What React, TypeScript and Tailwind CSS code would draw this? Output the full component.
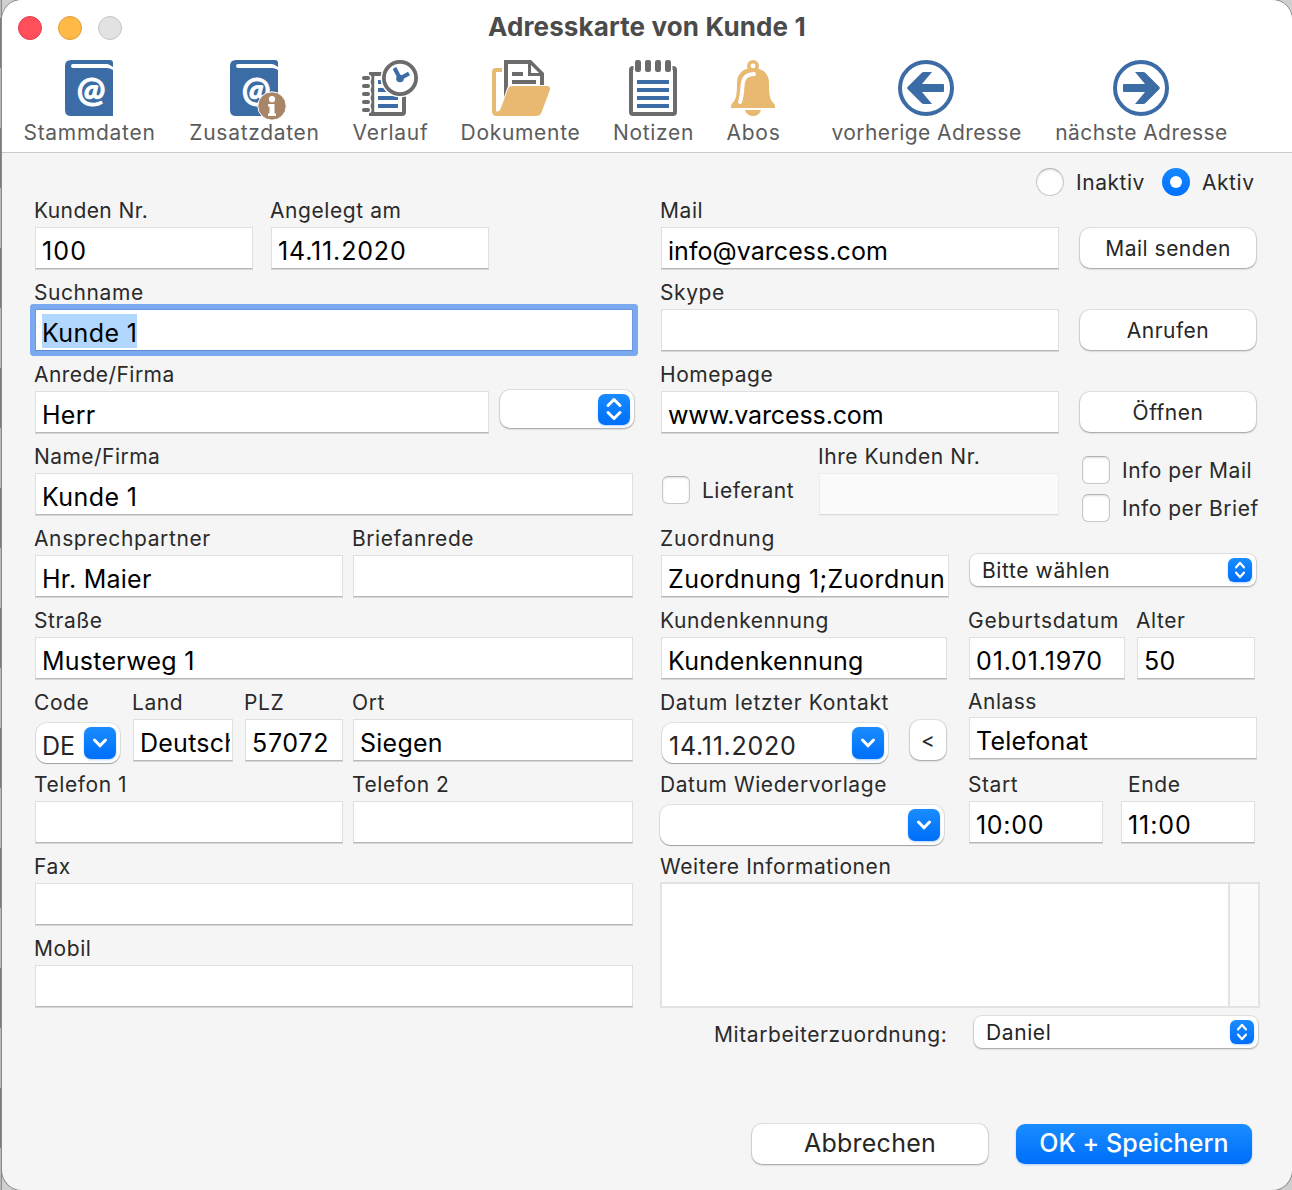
import type { ReactNode } from "react";
import clsx from "clsx";

const BLUE = "#3b6ca6";
const GRAY = "#6b6b6b";
const TAN = "#e9b972";

function Book() {
    return (
        <>
            <path d="M10 0H49Q52 0 52 3V56H10Q4 56 4 50V6Q4 0 10 0Z" fill={BLUE} />
            <path d="M12 4H46Q48 4 49.500 5.500L52 7V10Q49 8 46 8H12A2 2 0 0 1 12 4Z" fill="#fff" />
            <text x="30" y="41.500" textAnchor="middle" fontSize="34" fontWeight="700" fontFamily="Lato, sans-serif" fill="#fff" stroke="#fff" strokeWidth="0.9">@</text>
        </>
    );
}

function StammdatenIcon() {
    return (
        <svg width="56" height="60" viewBox="0 0 56 60" className="overflow-visible">
            <Book />
        </svg>
    );
}

function ZusatzdatenIcon() {
    return (
        <svg width="56" height="60" viewBox="0 0 56 60" className="overflow-visible">
            <Book />
            <circle cx="46" cy="46" r="14.200" fill="#a98568" stroke="#fff" strokeWidth="1" />
            <circle cx="46" cy="39.200" r="3.100" fill="#fff" />
            <path d="M42 44H48.500V53.500H50V56H42V53.500H43.500V46.500H42Z" fill="#fff" />
        </svg>
    );
}

function VerlaufIcon() {
    return (
        <svg width="56" height="60" viewBox="0 0 56 60">
            <path d="M7 14H40A2 2 0 0 1 42 16V52A2 2 0 0 1 40 54H7" fill="none" stroke={GRAY} strokeWidth="4" />
            <path d="M10.500 13V55" stroke={GRAY} strokeWidth="3.500" />
            {[18, 26, 34, 42, 50].map((y) => (
                <g key={y}>
                    <rect x="-1" y={y - 3.2} width="10.500" height="6.400" rx="3.200" fill="#fff" />
                    <rect x="0" y={y - 2} width="8" height="4" rx="2" fill={GRAY} />
                </g>
            ))}
            {[22, 30, 38, 46].map((y) => (
                <rect key={y} x="16" y={y - 2} width="20" height="4" fill={BLUE} />
            ))}
            <circle cx="38" cy="18" r="19.500" fill="#fff" />
            <circle cx="38" cy="18" r="16.100" fill="#fff" stroke={GRAY} strokeWidth="3.800" />
            <path d="M32.500 8L38 18.500L47 13.500" fill="none" stroke={BLUE} strokeWidth="4" />
            <circle cx="38" cy="18.500" r="3.800" fill={BLUE} />
        </svg>
    );
}

function DokumenteIcon() {
    return (
        <svg width="60" height="60" viewBox="0 0 60 60">
            <path d="M12 10H6Q4 10 4 12V51Q4 54 7 54H10" fill="none" stroke={TAN} strokeWidth="4" />
            <path d="M14 0H41L54 13V25H50V16H38V4H18V26L14 37Z" fill={GRAY} />
            <path d="M41 5V13H49Z" fill="#fff" />
            <path d="M22 12H33V16H22ZM22 20H46V24H22Z" fill={GRAY} />
            <path d="M22 26H57Q61 26 59.800 30L51.500 52.500Q50 56 46 56H7Q3 56 2.500 52L6 51.500Q9.500 52 10.500 49L18 29Q19 26 22 26Z" fill={TAN} />
        </svg>
    );
}

function NotizenIcon() {
    return (
        <svg width="56" height="60" viewBox="0 0 56 60">
            <rect x="6" y="8" width="44" height="46" rx="2" fill="#fff" stroke={GRAY} strokeWidth="4" />
            <rect x="8.500" y="0" width="39" height="14" fill="#fff" />
            {[10, 20, 30, 40].map((x) => (
                <rect key={x} x={x} y="0" width="6" height="12" rx="2.200" fill={GRAY} />
            ))}
            {[20, 28, 36, 44].map((y) => (
                <rect key={y} x="12" y={y} width="32" height="4" fill={BLUE} />
            ))}
        </svg>
    );
}

function AbosIcon() {
    return (
        <svg width="56" height="60" viewBox="0 0 56 60">
            <circle cx="28" cy="6" r="4.200" fill="none" stroke={TAN} strokeWidth="3.600" />
            <path d="M28 8C38 8 44 14 44 23C44 33 44.500 40 49 43.500Q50 44.500 50 46V48H6V46Q6 44.500 7 43.500C11.500 40 12 33 12 23C12 14 18 8 28 8Z" fill={TAN} />
            <path d="M29 14C20 14.500 18 19 17.500 26C17 34 16.500 38 15 42" fill="none" stroke="#fff" strokeWidth="4" strokeLinecap="round" />
            <circle cx="28" cy="6" r="2.300" fill="#fff" />
            <path d="M20 50H36Q34 56 28 56Q22 56 20 50Z" fill={TAN} />
        </svg>
    );
}

function ArrowIcon({ right }: { right?: boolean }) {
    return (
        <svg width="56" height="60" viewBox="0 0 56 60">
            <circle cx="28" cy="28" r="26" fill="none" stroke={BLUE} strokeWidth="4" />
            <path
                d="M9.500 27Q8.800 28 9.500 29L23.500 43Q24.500 44 26 44H34L24 32H45Q46 32 46 31V25Q46 24 45 24H24L34 12H26Q24.500 12 23.500 13Z"
                fill={BLUE}
                transform={right ? "matrix(-1 0 0 1 56 0)" : undefined}
            />
        </svg>
    );
}

interface ToolbarItemProps {
    label: string;
    className: string;
    tight?: boolean;
    children: ReactNode;
}

function ToolbarItem({ label, className, tight, children }: ToolbarItemProps) {
    return (
        <div className={clsx("flex shrink-0 flex-col items-center", className)}>
            {children}
            <span
                className={clsx(
                    "h-6 pl-px text-[21px] leading-[26px] whitespace-nowrap text-[#5c5c5c]",
                    tight ? "tracking-[0.43px]" : "tracking-[0.7px]"
                )}
            >
                {label}
            </span>
        </div>
    );
}

function Label({ children, className = "tracking-[0.57px]" }: { children: ReactNode; className?: string }) {
    return (
        <div className={clsx("-ml-px h-[29px] text-[21px] leading-[25px] whitespace-nowrap text-[#2a2a2a]", className)}>
            {children}
        </div>
    );
}

interface FieldProps {
    label: string;
    value?: ReactNode;
    className?: string;
    labelClassName?: string;
    valueClassName?: string;
    focused?: boolean;
    disabled?: boolean;
}

function Field({ label, value, className, labelClassName, valueClassName = "tracking-[0.25px]", focused, disabled }: FieldProps) {
    return (
        <div className={clsx("shrink-0", className)}>
            <Label className={labelClassName}>{label}</Label>
            <div
                className={clsx(
                    "h-[42px] border pr-[2px] pl-[6px] text-[25px] leading-[46px] whitespace-nowrap text-black",
                    valueClassName,
                    focused && "rounded-[1px] border-[#6a9ae2] border-b-[#5a8ad2] bg-white shadow-[0_0_0_5px_#7aa9f0]",
                    disabled && "border-[#ececec] border-b-[#dadada] bg-[#fafafa] shadow-[0_1px_0_#ececec]",
                    !focused && !disabled && "border-[#dfdfdf] border-b-[#b8b8b8] bg-white shadow-[0_1px_0_#d6d6d6]"
                )}
            >
                <div className="h-full overflow-hidden">{value}</div>
            </div>
        </div>
    );
}

function PushButton({ children, className }: { children: ReactNode; className?: string }) {
    return (
        <button
            className={clsx(
                "flex shrink-0 items-center justify-center rounded-[10px] bg-white text-[#262626] shadow-[0_0_0_1px_rgba(0,0,0,0.08),0_1px_2px_rgba(0,0,0,0.3)]",
                className
            )}
        >
            {children}
        </button>
    );
}

function UpDown({ small }: { small?: boolean }) {
    return (
        <span
            className={clsx(
                "flex shrink-0 items-center justify-center bg-linear-to-b from-[#1a8cff] to-[#006ef9] shadow-[0_1px_2px_rgba(0,110,255,0.3)]",
                small ? "size-6 rounded-[6px]" : "h-[31px] w-8 rounded-[7px]"
            )}
        >
            <svg width={small ? 12 : 18} height={small ? 18 : 24} viewBox="0 0 18 24" preserveAspectRatio="none">
                <path d="M3 8.500L9 2.500L15 8.500M3 15.500L9 21.500L15 15.500" fill="none" stroke="#fff" strokeWidth="3" strokeLinecap="round" strokeLinejoin="round" />
            </svg>
        </span>
    );
}

function PopUp({ value, className, small }: { value?: string; className: string; small?: boolean }) {
    return (
        <div
            className={clsx(
                "flex shrink-0 items-center justify-between bg-white text-[21px] tracking-[0.6px] text-[#262626] shadow-[0_0_0_1px_rgba(0,0,0,0.08),0_1px_2px_rgba(0,0,0,0.3)]",
                small ? "rounded-[8px] pr-1 pl-3" : "rounded-[10px] pr-1",
                className
            )}
        >
            <span className="pt-[2px]">{value}</span>
            <UpDown small={small} />
        </div>
    );
}

function ComboBox({ value, className }: { value?: string; className: string }) {
    return (
        <div
            className={clsx(
                "flex h-[40px] shrink-0 items-center justify-between rounded-[11px] bg-white pr-1 text-[25px] text-[#262626] shadow-[0_0_0_1px_rgba(0,0,0,0.08),0_1px_1px_rgba(0,0,0,0.3)]",
                className
            )}
        >
            <span className="pt-[8px]">{value}</span>
            <span className="flex size-8 shrink-0 items-center justify-center rounded-[7px] bg-linear-to-b from-[#1a8cff] to-[#006ef9] shadow-[0_1px_2px_rgba(0,110,255,0.3)]">
                <svg width="16" height="10" viewBox="0 0 16 10">
                    <path d="M2.500 2L8 7.800L13.500 2" fill="none" stroke="#fff" strokeWidth="3" strokeLinecap="round" strokeLinejoin="round" />
                </svg>
            </span>
        </div>
    );
}

function Check({ label }: { label: string }) {
    return (
        <label className="flex h-7 shrink-0 items-start gap-3 text-[21px] leading-[30px] tracking-[0.5px] whitespace-nowrap text-[#2a2a2a]">
            <span className="size-7 rounded-[6px] border border-[#c8c8c8] border-t-[#b4b4b4] bg-white shadow-[inset_0_1px_2px_rgba(0,0,0,0.14)]" />
            {label}
        </label>
    );
}

function Row({ children }: { children: ReactNode }) {
    return <div className="flex h-[82px]">{children}</div>;
}

export default function App() {
    return (
        <div className="flex h-[1190px] w-[1292px] overflow-hidden bg-[#cfcfcf] font-['Inter',sans-serif]">
            {/* Fensterrand links */}
            <div className="w-[2px] shrink-0 border-r border-[#8d8d8d] bg-[repeating-linear-gradient(to_bottom,#b9b9b9_0px,#b9b9b9_60px,#7d7d7d_60px,#7d7d7d_120px)] bg-[position:0_68px]" />
            <div className="flex w-[1290px] shrink-0 flex-col overflow-hidden rounded-[20px] bg-[#f5f5f5] shadow-[0_0_0_1px_#8a8a8a]">
                <header className="h-[153px] shrink-0 border-b border-[#cacaca] bg-white">
                    <div className="flex h-[60px] items-start pt-4">
                        <div className="ml-4 flex w-[104px] gap-4">
                            <span className="size-6 rounded-full border border-[#e2404a] bg-[#ff4f5a]" />
                            <span className="size-6 rounded-full border border-[#dd9d35] bg-[#ffb946]" />
                            <span className="size-6 rounded-full border border-[#c4c4c4] bg-[#e2e2e2]" />
                        </div>
                        <h1 className="ml-[366px] text-[26px] leading-[22px] font-bold tracking-[0.13px] whitespace-nowrap text-[#4b4b4b]">Adresskarte von Kunde 1</h1>
                    </div>
                    <div className="flex pl-[21px]">
                        <ToolbarItem label="Stammdaten" className="w-[132px]"><StammdatenIcon /></ToolbarItem>
                        <ToolbarItem label="Zusatzdaten" className="ml-[33px] w-[132px]"><ZusatzdatenIcon /></ToolbarItem>
                        <ToolbarItem label="Verlauf" className="ml-[33px] w-[74px]"><VerlaufIcon /></ToolbarItem>
                        <ToolbarItem label="Dokumente" className="ml-[33px] w-[120px]"><DokumenteIcon /></ToolbarItem>
                        <ToolbarItem label="Notizen" className="ml-[33px] w-[80px]"><NotizenIcon /></ToolbarItem>
                        <ToolbarItem label="Abos" className="ml-[33px] w-[54px]"><AbosIcon /></ToolbarItem>
                        <ToolbarItem tight label="vorherige Adresse" className="ml-[51px] w-[190px]"><ArrowIcon /></ToolbarItem>
                        <ToolbarItem tight label="nächste Adresse" className="ml-[33px] w-[174px]"><ArrowIcon right /></ToolbarItem>
                    </div>
                </header>

                <main className="flex h-[902px] shrink-0">
                    <section className="ml-[33px] w-[600px] shrink-0 pt-[45px]">
                        <Row>
                            <Field label="Kunden Nr." value="100" className="w-[218px]" valueClassName="tracking-[1.1px]" labelClassName="tracking-[0.4px]" />
                            <Field label="Angelegt am" value="14.11.2020" className="ml-[18px] w-[218px]" valueClassName="tracking-[0.85px]" />
                        </Row>
                        <Row>
                            <Field
                                label="Suchname"
                                focused
                                className="w-[598px]"
                                valueClassName="tracking-[0.4px]"
                                value={<span className="mt-[4px] inline-block h-[34px] bg-[#b2d7fe] align-top leading-[38px]">Kunde 1</span>}
                            />
                        </Row>
                        <Row>
                            <Field label="Anrede/Firma" value="Herr" className="w-[454px]" labelClassName="tracking-[0.45px]" />
                            <PopUp className="mt-[28px] ml-[11px] h-[38px] w-[134px]" />
                        </Row>
                        <Row>
                            <Field label="Name/Firma" value="Kunde 1" className="w-[598px]" labelClassName="tracking-[0.45px]" valueClassName="tracking-[0.4px]" />
                        </Row>
                        <Row>
                            <Field label="Ansprechpartner" value="Hr. Maier" className="w-[308px]" labelClassName="tracking-[0.62px]" />
                            <Field label="Briefanrede" className="ml-[10px] w-[280px]" />
                        </Row>
                        <Row>
                            <Field label="Straße" value="Musterweg 1" className="w-[598px]" />
                        </Row>
                        <Row>
                            <div className="shrink-0">
                                <Label>Code</Label>
                                <ComboBox value="DE" className="mt-[4px] ml-px w-[84px] pl-[6px]" />
                            </div>
                            <Field label="Land" value="Deutsch" className="ml-[13px] w-[100px]" />
                            <Field label="PLZ" value="57072" className="ml-[12px] w-[98px]" valueClassName="tracking-[0.7px]" />
                            <Field label="Ort" value="Siegen" className="ml-[10px] w-[280px]" />
                        </Row>
                        <Row>
                            <Field label="Telefon 1" className="w-[308px]" />
                            <Field label="Telefon 2" className="ml-[10px] w-[280px]" />
                        </Row>
                        <Row>
                            <Field label="Fax" className="w-[598px]" />
                        </Row>
                        <Row>
                            <Field label="Mobil" className="w-[598px]" />
                        </Row>
                    </section>

                    <section className="ml-[26px] w-[600px] shrink-0">
                        <div className="flex h-[45px] gap-[17px] pt-[15px] pl-[375px] text-[21px] leading-[30px] tracking-[0.55px] text-[#2a2a2a]">
                            <label className="flex w-[109px] shrink-0 items-start gap-3">
                                <span className="size-7 shrink-0 rounded-full border border-[#c8c8c8] border-t-[#b4b4b4] bg-white shadow-[inset_0_1px_2px_rgba(0,0,0,0.14)]" />
                                Inaktiv
                            </label>
                            <label className="flex items-start gap-3">
                                <span className="flex size-7 shrink-0 items-center justify-center rounded-full bg-linear-to-b from-[#1687ff] to-[#0070ff]">
                                    <span className="size-3 rounded-full bg-white" />
                                </span>
                                Aktiv
                            </label>
                        </div>
                        <Row>
                            <Field label="Mail" value="info@varcess.com" className="w-[398px]" valueClassName="tracking-[0.05px]" />
                            <PushButton className="mt-[30px] ml-[21px] h-[40px] w-[176px] pt-[2px] text-[21px] tracking-[0.5px]">Mail senden</PushButton>
                        </Row>
                        <Row>
                            <Field label="Skype" className="w-[398px]" />
                            <PushButton className="mt-[30px] ml-[21px] h-[40px] w-[176px] pt-[2px] text-[21px] tracking-[0.5px]">Anrufen</PushButton>
                        </Row>
                        <Row>
                            <Field label="Homepage" value="www.varcess.com" className="w-[398px]" valueClassName="tracking-[-0.12px]" />
                            <PushButton className="mt-[30px] ml-[21px] h-[40px] w-[176px] pt-[2px] text-[21px] tracking-[0.5px]">Öffnen</PushButton>
                        </Row>
                        <Row>
                            <div className="w-[158px] shrink-0 pt-[32px] pl-px">
                                <Check label="Lieferant" />
                            </div>
                            <Field label="Ihre Kunden Nr." disabled className="w-[240px]" />
                            <div className="mt-[12px] ml-[23px] flex flex-col gap-[10px]">
                                <Check label="Info per Mail" />
                                <Check label="Info per Brief" />
                            </div>
                        </Row>
                        <Row>
                            <Field label="Zuordnung" value="Zuordnung 1;Zuordnun" className="w-[288px]" labelClassName="tracking-[0.7px]" valueClassName="tracking-[0.45px]" />
                            <PopUp small value="Bitte wählen" className="mt-[28px] ml-[21px] h-8 w-[286px]" />
                        </Row>
                        <Row>
                            <Field label="Kundenkennung" value="Kundenkennung" className="w-[286px]" />
                            <Field label="Geburtsdatum" value="01.01.1970" className="ml-[22px] w-[156px]" valueClassName="tracking-[0.87px]" labelClassName="tracking-[0.8px]" />
                            <Field label="Alter" value="50" className="ml-[12px] w-[118px]" />
                        </Row>
                        <Row>
                            <div className="w-[227px] shrink-0">
                                <Label className="tracking-[0.7px]">Datum letzter Kontakt</Label>
                                <ComboBox value="14.11.2020" className="mt-[4px] ml-px w-[226px] pl-[7px] tracking-[0.75px]" />
                            </div>
                            <PushButton className="mt-[30px] ml-[22px] h-[40px] w-[36px] pt-[2px] text-[21px]">&lt;</PushButton>
                            <Field label="Anlass" value="Telefonat" className="-mt-[2px] ml-[23px] w-[288px]" labelClassName="pt-px tracking-[0.5px]" />
                        </Row>
                        <Row>
                            <div className="w-[283px] shrink-0">
                                <Label>Datum Wiedervorlage</Label>
                                <ComboBox className="mt-[4px] -ml-px w-[284px]" />
                            </div>
                            <Field label="Start" value="10:00" className="ml-[25px] w-[134px]" valueClassName="tracking-[0.7px]" />
                            <Field label="Ende" value="11:00" className="ml-[18px] w-[134px]" labelClassName="pl-[8px] tracking-[0.6px]" valueClassName="tracking-[0.9px]" />
                        </Row>
                        <div className="h-[154px]">
                            <Label className="mb-[-1px] tracking-[0.57px]">Weitere Informationen</Label>
                            <div className="-ml-px flex h-[126px] w-[600px] justify-end border-2 border-[#e3e3e3] bg-white">
                                <div className="w-[30px] border-l-2 border-[#e3e3e3] bg-[#fafafa]" />
                            </div>
                        </div>
                        <div className="mt-[8px] flex">
                            <span className="ml-[53px] w-[260px] shrink-0 pt-[6px] text-[21px] leading-[25px] tracking-[0.58px] text-[#2a2a2a]">Mitarbeiterzuordnung:</span>
                            <PopUp small value="Daniel" className="h-8 w-[284px]" />
                        </div>
                    </section>
                </main>

                <footer className="flex pt-[69px] pl-[750px]">
                    <PushButton className="h-[40px] w-[236px] text-[25px] tracking-[0.25px]">Abbrechen</PushButton>
                    <button className="ml-[28px] h-[40px] w-[236px] rounded-[9px] bg-linear-to-b from-[#1a8cff] to-[#006ef9] pb-[2px] text-[25px] leading-[38px] font-medium tracking-[0.1px] text-white shadow-[0_1px_2px_rgba(0,110,255,0.3)]">
                        OK + Speichern
                    </button>
                </footer>
            </div>
        </div>
    );
}
